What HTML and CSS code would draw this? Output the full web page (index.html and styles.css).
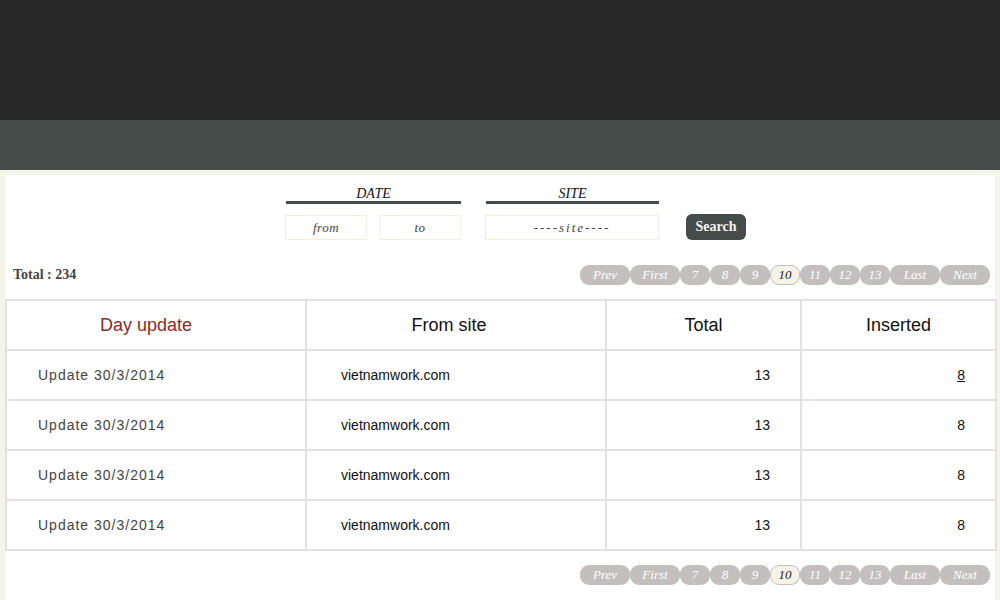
FILE: index.html
```html
<!DOCTYPE html>
<html>
<head>
<meta charset="utf-8">
<link rel="stylesheet" href="styles.css">
</head>
<body>
<div class="topbar"></div>
<div class="navbar"></div>
<div class="main">
  <form class="search">
    <div class="group group-date">
      <div class="group-label">DATE</div>
      <div class="inputs">
        <input class="inp inp-small" placeholder="from">
        <input class="inp inp-small" placeholder="to">
      </div>
    </div>
    <div class="group group-site">
      <div class="group-label">SITE</div>
      <div class="inputs">
        <input class="inp inp-site" placeholder="----site----">
      </div>
    </div>
    <button type="button" class="btn-search">Search</button>
  </form>

  <div class="toolbar">
    <div class="total">Total : 234</div>
    <div class="pager">
      <span class="pg pg-wide">Prev</span><span class="pg pg-wide">First</span><span class="pg">7</span><span class="pg">8</span><span class="pg">9</span><span class="pg pg-active">10</span><span class="pg">11</span><span class="pg">12</span><span class="pg">13</span><span class="pg pg-wide">Last</span><span class="pg pg-wide">Next</span>
    </div>
  </div>

  <table class="grid">
    <colgroup><col class="c1"><col class="c2"><col class="c3"><col class="c4"></colgroup>
    <thead>
      <tr><th class="h-day">Day update</th><th class="h-site">From site</th><th>Total</th><th>Inserted</th></tr>
    </thead>
    <tbody>
      <tr><td class="d-day">Update 30/3/2014</td><td class="d-site">vietnamwork.com</td><td class="d-num d-total">13</td><td class="d-num"><a class="link" href="#">8</a></td></tr>
      <tr><td class="d-day">Update 30/3/2014</td><td class="d-site">vietnamwork.com</td><td class="d-num d-total">13</td><td class="d-num">8</td></tr>
      <tr><td class="d-day">Update 30/3/2014</td><td class="d-site">vietnamwork.com</td><td class="d-num d-total">13</td><td class="d-num">8</td></tr>
      <tr><td class="d-day">Update 30/3/2014</td><td class="d-site">vietnamwork.com</td><td class="d-num d-total">13</td><td class="d-num">8</td></tr>
    </tbody>
  </table>

  <div class="toolbar toolbar-bottom">
    <div class="pager">
      <span class="pg pg-wide">Prev</span><span class="pg pg-wide">First</span><span class="pg">7</span><span class="pg">8</span><span class="pg">9</span><span class="pg pg-active">10</span><span class="pg">11</span><span class="pg">12</span><span class="pg">13</span><span class="pg pg-wide">Last</span><span class="pg pg-wide">Next</span>
    </div>
  </div>
</div>
</body>
</html>
```
FILE: styles.css
```css
html, body {
  margin: 0;
  padding: 0;
}
body {
  background: #f6f3e8;
  font-family: "Liberation Sans", Arial, sans-serif;
  overflow: hidden;
}
.topbar {
  height: 120px;
  background: #282828;
}
.navbar {
  height: 50px;
  background: #464c4a;
}
.main {
  margin: 5px 5px 0 5px;
  background: #ffffff;
  height: 430px;
}
.search {
  display: flex;
  align-items: flex-start;
  padding: 12px 0 0 280px;
  margin: 0;
}
.group-label {
  font-family: "Liberation Serif", "Times New Roman", serif;
  font-style: italic;
  font-size: 14px;
  line-height: 14px;
  color: #111;
  text-align: center;
  border-bottom: 3px solid #464c4a;
  margin-left: 1px;
}
.group-date {
  width: 176px;
}
.group-site {
  width: 174px;
  margin-left: 24px;
}
.inputs {
  display: flex;
  justify-content: space-between;
  margin-top: 11px;
}
.inp {
  box-sizing: border-box;
  height: 25px;
  border: 1px solid #f3efdf;
  background: #fff;
  font-family: "Liberation Serif", "Times New Roman", serif;
  font-style: italic;
  font-size: 13px;
  text-align: center;
  padding: 0;
  outline: none;
}
.inp::placeholder {
  color: #444;
  letter-spacing: 0.5px;
}
.inp-small {
  width: 82px;
}
.inp-site {
  width: 174px;
}
.inp-site::placeholder {
  letter-spacing: 2px;
}
.btn-search {
  margin: 27px 0 0 27px;
  width: 60px;
  height: 26px;
  border: none;
  border-radius: 6px;
  background: #464c4a;
  color: #f4f4f4;
  font-family: "Liberation Serif", "Times New Roman", serif;
  font-weight: bold;
  font-size: 14px;
  padding: 0;
}
.toolbar {
  display: flex;
  justify-content: space-between;
  align-items: center;
  height: 20px;
  margin-top: 25px;
  padding: 0 5px 0 8px;
}
.toolbar-bottom {
  justify-content: flex-end;
  margin-top: 14px;
}
.total {
  font-family: "Liberation Serif", "Times New Roman", serif;
  font-weight: bold;
  font-size: 14px;
  color: #444;
}
.pager {
  display: flex;
}
.pg {
  box-sizing: border-box;
  width: 30px;
  height: 20px;
  border-radius: 9px;
  background: #c4bfbf;
  color: #fff;
  font-family: "Liberation Serif", "Times New Roman", serif;
  font-style: italic;
  font-size: 13px;
  line-height: 20px;
  text-align: center;
}
.pg-wide {
  width: 50px;
}
.pg-active {
  background: #f6f3e8;
  border: 1px solid #c4bfbf;
  color: #222;
  line-height: 18px;
}
.grid {
  width: 100%;
  margin-top: 14px;
  border-collapse: collapse;
  table-layout: fixed;
}
.c1 { width: 300px; }
.c2 { width: 300px; }
.c3 { width: 195px; }
.c4 { width: 195px; }
.grid th, .grid td {
  border: 2px solid #e6e1e1;
  height: 48px;
  padding: 0;
  vertical-align: middle;
}
.grid th {
  font-weight: normal;
  font-size: 18px;
  color: #111;
  text-align: center;
}
.grid th.h-day {
  color: #8b2a2a;
  padding-right: 20px;
}
.grid th.h-site {
  padding-right: 14px;
}
.d-day {
  padding-left: 31px !important;
  font-size: 14px;
  letter-spacing: 1px;
  color: #444;
}
.d-site {
  padding-left: 34px !important;
  font-size: 14px;
  color: #111;
}
.d-num {
  text-align: right;
  padding-right: 30px !important;
  font-size: 14px;
  color: #111;
}
.link {
  color: #111;
  text-decoration: underline;
}
```
